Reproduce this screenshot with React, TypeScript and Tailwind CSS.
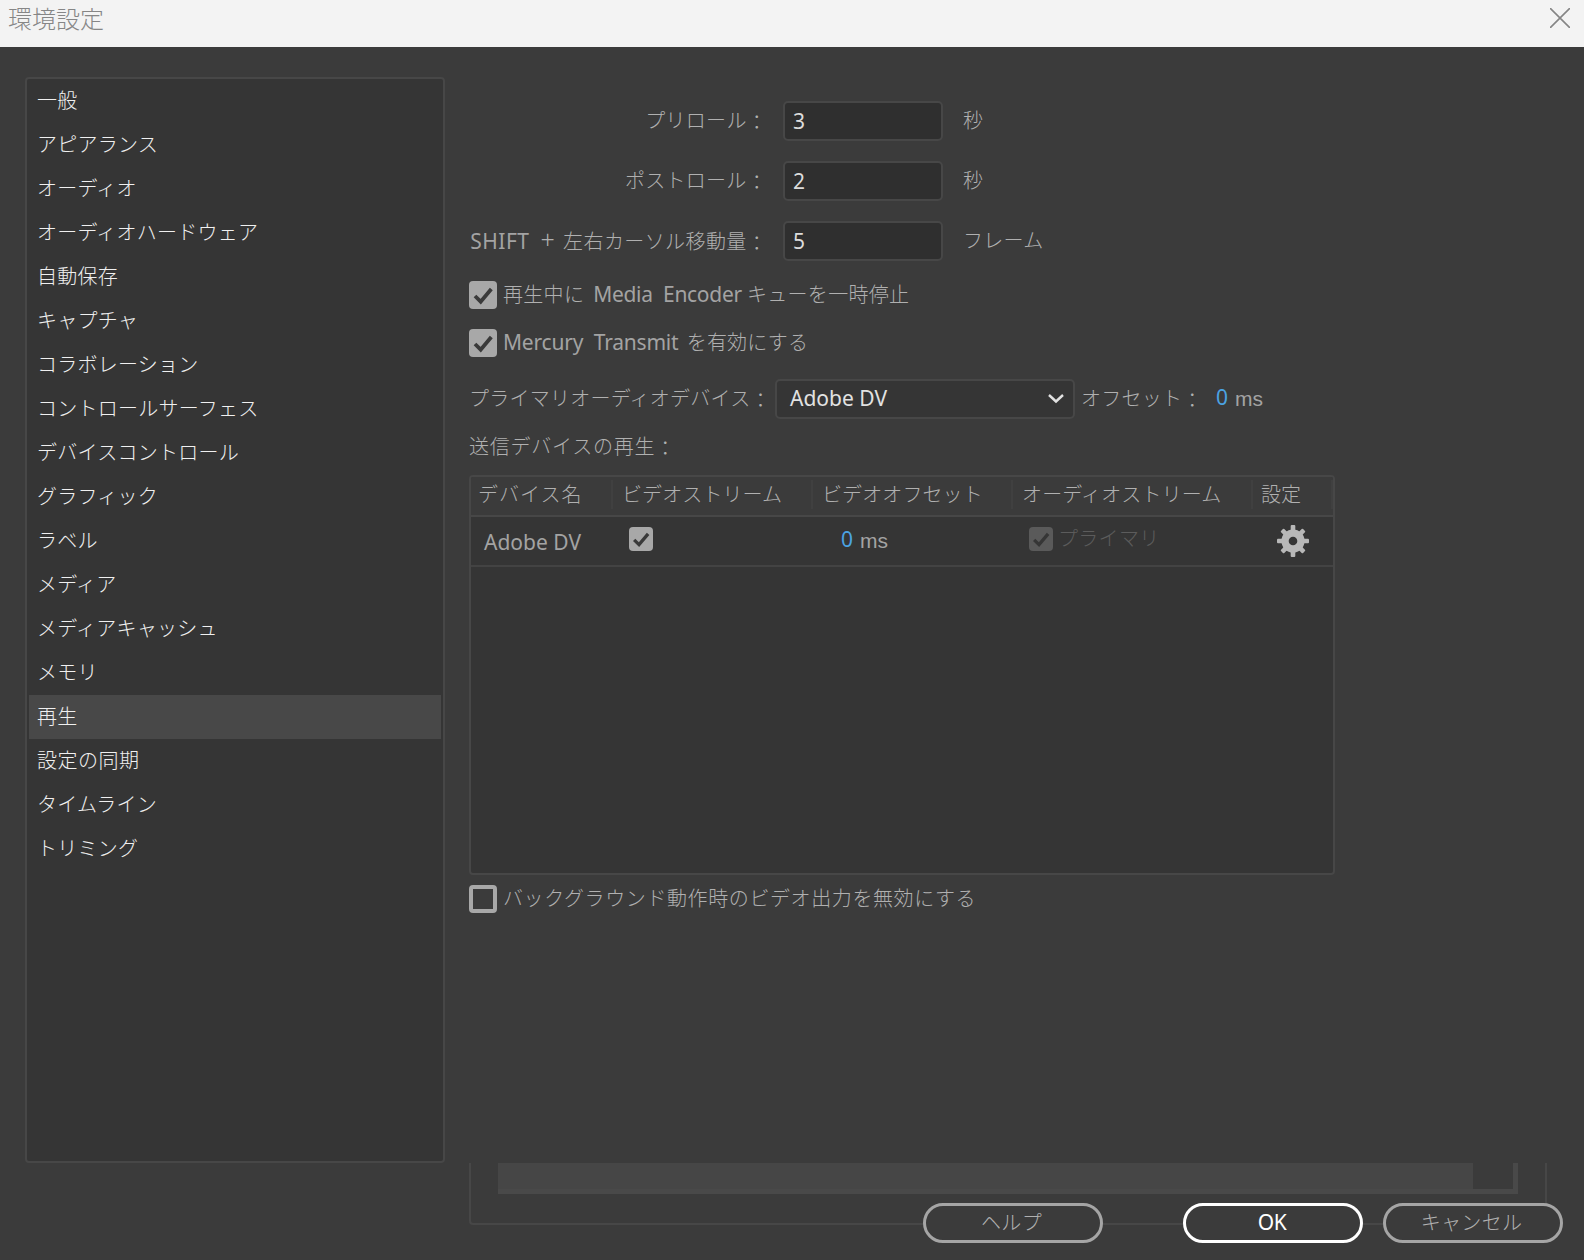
import type { ReactNode } from "react";
import clsx from "clsx";

const categories = [
  "一般",
  "アピアランス",
  "オーディオ",
  "オーディオハードウェア",
  "自動保存",
  "キャプチャ",
  "コラボレーション",
  "コントロールサーフェス",
  "デバイスコントロール",
  "グラフィック",
  "ラベル",
  "メディア",
  "メディアキャッシュ",
  "メモリ",
  "再生",
  "設定の同期",
  "タイムライン",
  "トリミング",
];

// Full-width colon, dropped slightly so it sits near the baseline.
function Colon() {
  return <span className="align-[-2px] leading-none">：</span>;
}

interface NumberRowProps {
  label: ReactNode;
  value: string;
  unit: string;
}

function NumberRow({ label, value, unit }: NumberRowProps) {
  return (
    <div className="flex h-10 items-center">
      <div className="w-[298px] shrink-0 text-right whitespace-pre tracking-[0.3px]">
        {label}
        <Colon />
      </div>
      <div className="ml-4 flex h-10 w-40 items-center rounded-[5px] border-2 border-[#474747] bg-[#2f2f2f] pb-px pl-2 text-[21px] font-normal text-[#dcdcdc]">
        {value}
      </div>
      <span className="ml-5 tracking-[0.3px]">{unit}</span>
    </div>
  );
}

interface CheckboxProps {
  checked?: boolean;
  small?: boolean;
  disabled?: boolean;
}

function Checkbox({ checked, small, disabled }: CheckboxProps) {
  return (
    <span
      className={clsx(
        "flex shrink-0 items-center justify-center rounded-[4px]",
        small ? "size-6" : "size-7",
        checked && (disabled ? "bg-[#5a5a5a]" : "bg-[#a8a8a8]"),
        !checked && "border-4 border-[#a8a8a8]",
      )}
    >
      {checked ? (
        <svg viewBox="0 0 28 28" className="size-full" fill="none">
          <path
            d="M6 15 L11.7 20.6 L22.3 8"
            stroke={disabled ? "#363636" : "#3a3a3a"}
            strokeWidth="3.8"
          />
        </svg>
      ) : null}
    </span>
  );
}

function GearIcon() {
  return (
    <svg viewBox="-16 -16 32 32" className="size-8" fill="#b8b8b8">
      {[0, 45, 90, 135].map((angle) => (
        <rect
          key={angle}
          x="-2.3"
          y={angle % 90 ? -15.6 : -16}
          width="4.6"
          height={angle % 90 ? 31.2 : 32}
          rx="1"
          transform={`rotate(${angle})`}
        />
      ))}
      <circle r="11.6" />
      <circle r="4.3" fill="#353535" />
    </svg>
  );
}

interface OffsetValueProps {
  className?: string;
}

function OffsetValue({ className }: OffsetValueProps) {
  return (
    <span className={clsx("flex items-baseline pb-0.5", className)}>
      <span className="-translate-y-px text-[21px] font-normal text-[#4ba3e3]">0</span>
      <span className="ml-[7px] font-['Liberation_Sans',sans-serif] text-[21px] text-[#a3a3a3]">ms</span>
    </span>
  );
}

function HeaderCell({ children, className }: { children: ReactNode; className: string }) {
  return (
    <div className={clsx("h-[29px] border-r-2 border-[#404040] leading-[30px]", className)}>
      {children}
    </div>
  );
}

function DialogButton({ children, primary, className }: { children: string; primary?: boolean; className?: string }) {
  return (
    <button
      className={clsx(
        "h-10 w-[180px] rounded-[20px] border-[3px] bg-[#3b3b3b]",
        primary
          ? "border-white pr-0.5 pb-0.5 text-[21px] font-normal tracking-[-0.5px] text-white"
          : "border-[#a5a5a5] pr-[3px] tracking-[0.3px]",
        className,
      )}
    >
      {children}
    </button>
  );
}

export default function App() {
  return (
    <div className="flex h-[1260px] w-[1584px] flex-col overflow-hidden whitespace-nowrap bg-[#3b3b3b] font-['Noto_Sans','Noto_Sans_CJK_JP',sans-serif] text-[20px] leading-7 font-light text-[#b0b0b0]">
      <header className="flex h-[47px] shrink-0 items-start justify-between bg-[#f3f3f3] pl-2 pr-[14px]">
        <h1 className="pt-[3px] text-[24px] leading-8 font-light text-[#868686]">環境設定</h1>
        <svg viewBox="0 0 20 20" className="mt-2 size-5" stroke="#858585" strokeWidth="1.6">
          <path d="M0 0 L20 20 M20 0 L0 20" />
        </svg>
      </header>

      <div className="flex flex-1">
        <nav className="mt-[30px] ml-[25px] h-[1086px] w-[420px] shrink-0 rounded-[4px] border-2 border-[#474747] bg-[#353535] px-0.5 text-[#f0f0f0]">
          {categories.map((name) => (
            <div
              key={name}
              className={clsx(
                "flex h-11 items-center pl-2",
                name === "再生" && "bg-[#484848]",
                name === "設定の同期" ? "tracking-[0.5px]" : "tracking-[0.25px]",
              )}
            >
              {name}
            </div>
          ))}
        </nav>

        <main className="ml-6 flex w-[1094px] flex-col">
          <div className="mt-[54px] flex flex-col gap-5">
            <NumberRow label="プリロール" value="3" unit="秒" />
            <NumberRow label="ポストロール" value="2" unit="秒" />
            <NumberRow
              label={
                <>
                  <span className="text-[21px] font-normal tracking-[0.5px] text-[#a3a3a3]">SHIFT</span>
                  <span className="mr-2 ml-[11px] text-[25px] leading-none">+</span>
                  <span className="tracking-[0.4px]">左右カーソル移動量</span>
                </>
              }
              value="5"
              unit="フレーム"
            />
          </div>

          <div className="mt-5 flex h-7 items-center gap-[6px]">
            <Checkbox checked />
            <span className="whitespace-pre pb-0.5 tracking-[0.3px]">
              再生中に<span className="ml-[9px] text-[21px] font-normal tracking-[-0.3px] text-[#a3a3a3]">Media  Encoder </span>キューを一時停止
            </span>
          </div>
          <div className="mt-5 flex h-7 items-center gap-[6px]">
            <Checkbox checked />
            <span className="whitespace-pre pb-px tracking-[0.2px]">
              <span className="text-[21px] font-normal tracking-[-0.2px] text-[#a3a3a3]">Mercury  Transmit </span>
              <span className="ml-[3px]">を有効にする</span>
            </span>
          </div>

          <div className="mt-[22px] flex h-10 items-center">
            <span className="w-[306px] shrink-0 tracking-[0.25px]">
              プライマリオーディオデバイス
              <Colon />
            </span>
            <div className="flex h-10 w-[300px] items-center justify-between rounded-[5px] border-2 border-[#474747] bg-[#353535] pr-[9px] pl-[13px] text-[#e2e2e2]">
              <span className="pb-0.5 text-[21px] font-normal">Adobe DV</span>
              <svg viewBox="0 0 16 10" className="h-2.5 w-4" fill="none" stroke="#e2e2e2" strokeWidth="2.4">
                <path d="M1 1 L8 7.5 L15 1" />
              </svg>
            </div>
            <span className="ml-[6px] w-[135px] tracking-[0.25px]">
              オフセット
              <Colon />
            </span>
            <OffsetValue />
          </div>

          <div className="mt-3 h-8 leading-8 tracking-[0.75px]">
            送信デバイスの再生
            <Colon />
          </div>

          <section className="mt-3 h-[400px] w-[866px] overflow-hidden rounded-[4px] border-2 border-[#474747] bg-[#353535]">
            <div className="flex h-10 items-start border-b-2 border-[#474747] bg-[#3b3b3b] pt-[3px]">
              <HeaderCell className="w-[142px] pl-[7px] tracking-[1px]">デバイス名</HeaderCell>
              <HeaderCell className="w-[200px] pl-[9px] tracking-[0.1px]">ビデオストリーム</HeaderCell>
              <HeaderCell className="w-[200px] pl-[9px] tracking-[0.1px]">ビデオオフセット</HeaderCell>
              <HeaderCell className="w-[240px] pl-[9px] tracking-[0.15px]">オーディオストリーム</HeaderCell>
              <HeaderCell className="w-20 pl-2">設定</HeaderCell>
            </div>
            <div className="flex h-[50px] items-center border-b-2 border-[#434343]">
              <span className="w-[158px] pt-0.5 pl-[13px] text-[21px] font-normal text-[#a3a3a3]">Adobe DV</span>
              <span className="w-[212px] pb-1">
                <Checkbox checked small />
              </span>
              <OffsetValue className="w-[188px]" />
              <span className="flex w-[248px] items-center gap-[5px] pb-1 tracking-[0.3px] text-[#5c5c5c]">
                <Checkbox checked small disabled />
                プライマリ
              </span>
              <GearIcon />
            </div>
          </section>

          <div className="mt-[10px] flex h-7 items-center gap-[6px]">
            <Checkbox />
            <span className="tracking-[0.6px]">バックグラウンド動作時のビデオ出力を無効にする</span>
          </div>

          <div className="mt-[250px] h-[62px] w-[1078px] shrink-0 rounded-b-[4px] border-2 border-t-0 border-[#474747] pl-[27px]">
            <div className="flex h-[31px] w-[1020px] justify-end border-r-[5px] border-b-[5px] border-[#494949] bg-[#464646]">
              <div className="w-10 bg-[#3b3b3b]" />
            </div>
          </div>
          <div className="relative -mt-[22px] flex justify-end">
            <DialogButton className="mr-20">ヘルプ</DialogButton>
            <DialogButton primary className="mr-5">OK</DialogButton>
            <DialogButton>キャンセル</DialogButton>
          </div>
        </main>
      </div>
    </div>
  );
}
